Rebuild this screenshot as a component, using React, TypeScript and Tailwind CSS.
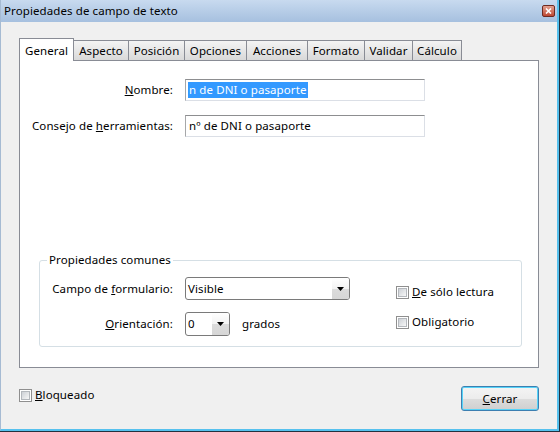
import React from 'react'

// Diálogo "Propiedades de campo de texto" (estilo Windows Vista)

const tabs = [
  { label: 'General', w: 55 },
  { label: 'Aspecto', w: 55 },
  { label: 'Posición', w: 56 },
  { label: 'Opciones', w: 62 },
  { label: 'Acciones', w: 61 },
  { label: 'Formato', w: 57 },
  { label: 'Validar', w: 48 },
  { label: 'Cálculo', w: 49 },
]

function Arrow() {
  return (
    <svg width="7" height="4" viewBox="0 0 7 4">
      <polygon points="0,0 7,0 3.5,4" fill="#000" />
    </svg>
  )
}

function CheckBox({ label }: { label: React.ReactNode }) {
  return (
    <div className="flex items-center">
      <div className="w-[13px] h-[13px] border border-[#8f8f8f] bg-white p-px">
        <div className="w-full h-full border border-[#b4b8bd] bg-linear-to-br from-[#cdd1d6] to-[#f7f7f7]" />
      </div>
      <span className="ml-[3px] leading-[14px]">{label}</span>
    </div>
  )
}

function TextBox({ children, selected }: { children: React.ReactNode; selected?: boolean }) {
  return (
    <div className="w-[240px] h-[22px] border border-[#dbdfe6] border-t-[#8d8e90] border-l-[#a6a7a9] bg-white flex items-center pl-[2px]">
      <span className={selected ? 'bg-[#3399ff] text-white leading-[16px] px-px' : 'leading-[16px] px-px'}>
        {children}
      </span>
    </div>
  )
}

export default function App() {
  return (
    <div className="w-[560px] h-[432px] border-r border-b border-[#24313f] font-['Noto_Sans',sans-serif] text-[11.5px] tracking-[0.1px] text-black">
      <div className="h-full flex flex-col border-l border-l-[#a6bbd3] border-r-2 border-b-2 border-r-[#56c1ee] border-b-[#56c1ee] bg-[#f0f0f0]">
        {/* barra de título */}
        <div className="h-[22px] shrink-0 flex items-center justify-between bg-linear-to-b from-[#c8daef] to-[#a6c0df] pl-[3px] pr-[2px]">
          <span className="leading-[14px]">Propiedades de campo de texto</span>
          <div className="w-[13px] h-[12px] rounded-[2px] border border-[#6e2a21] bg-linear-to-b from-[#e2a090] to-[#bd4631] flex items-center justify-center">
            <svg width="7" height="6" viewBox="0 0 7 6">
              <path d="M1 0.5 L6 5.5 M6 0.5 L1 5.5" stroke="#fff" strokeWidth="1.6" />
            </svg>
          </div>
        </div>

        <div className="flex-1 flex flex-col pl-[18px] pr-[18px] pt-[16px]">
          {/* pestañas */}
          <div className="flex items-end h-[22px] relative z-10">
            {tabs.map((t, i) =>
              i === 0 ? (
                <div
                  key={t.label}
                  style={{ width: t.w }}
                  className="h-[23px] -mb-px border border-b-0 border-[#898c95] bg-white flex items-start justify-center pt-[3px]"
                >
                  {t.label}
                </div>
              ) : (
                <div
                  key={t.label}
                  style={{ width: t.w }}
                  className="h-[20px] border border-b-0 border-l-0 border-[#898c95] bg-linear-to-b from-[#f4f4f4] to-[#d9d9d9] flex items-center justify-center"
                >
                  {t.label}
                </div>
              )
            )}
          </div>

          {/* panel */}
          <div className="w-[520px] h-[308px] border border-[#898c95] bg-white flex flex-col pt-[18px]">
            <div className="flex items-center">
              <div className="w-[153px] mr-[12px] text-right">
                <u>N</u>ombre:
              </div>
              <TextBox selected>n de DNI o pasaporte</TextBox>
            </div>
            <div className="flex items-center mt-[14px]">
              <div className="w-[153px] mr-[12px] text-right">
                Consejo de <u>h</u>erramientas:
              </div>
              <TextBox>nº de DNI o pasaporte</TextBox>
            </div>

            <fieldset className="mt-auto mb-[20px] ml-[19px] w-[483px] border border-[#d5dfe5] rounded-[3px] pb-[10px]">
              <legend className="ml-[7px] px-[2px] leading-[14px]">Propiedades comunes</legend>
              <div className="flex pt-[10px]">
                <div className="flex flex-col">
                  <div className="flex items-center">
                    <div className="w-[133px] mr-[12px] text-right">
                      Campo de <u>f</u>ormulario:
                    </div>
                    <div className="w-[165px] h-[23px] rounded-[3px] border border-[#7a7a7a] bg-white flex items-stretch overflow-hidden">
                      <div className="flex-1 flex items-center pl-[2px]">Visible</div>
                      <div className="w-[17px] flex items-center justify-center bg-[linear-gradient(#ffffff_0%,#f3f3f3_50%,#dcdcdc_50%,#d6d6d6_100%)]">
                        <Arrow />
                      </div>
                    </div>
                  </div>
                  <div className="flex items-center mt-[12px]">
                    <div className="w-[133px] mr-[12px] text-right">
                      <u>O</u>rientación:
                    </div>
                    <div className="w-[45px] h-[24px] rounded-[3px] border border-[#7a7a7a] bg-white flex items-stretch overflow-hidden">
                      <div className="flex-1 flex items-center pl-[2px]">0</div>
                      <div className="w-[17px] flex items-center justify-center bg-[linear-gradient(#ffffff_0%,#f3f3f3_50%,#dcdcdc_50%,#d6d6d6_100%)]">
                        <Arrow />
                      </div>
                    </div>
                    <span className="ml-[12px]">grados</span>
                  </div>
                </div>
                <div className="flex flex-col ml-[46px] pt-[8px] gap-[16px]">
                  <CheckBox label={<><u>D</u>e sólo lectura</>} />
                  <CheckBox label="Obligatorio" />
                </div>
              </div>
            </fieldset>
          </div>

          {/* pie */}
          <div className="flex items-start justify-between mt-[18px]">
            <div className="mt-[2px]">
              <CheckBox label={<><u>B</u>loqueado</>} />
            </div>
            <button className="w-[78px] h-[25px] rounded-[3px] border border-[#3c7fb1] shadow-[inset_0_0_0_1px_#56d3f8] bg-[linear-gradient(#f4f4f4_0%,#ececec_50%,#dddddd_50%,#cfcfcf_100%)] flex items-center justify-center">
              <span>
                <u>C</u>errar
              </span>
            </button>
          </div>
        </div>
      </div>
    </div>
  )
}
